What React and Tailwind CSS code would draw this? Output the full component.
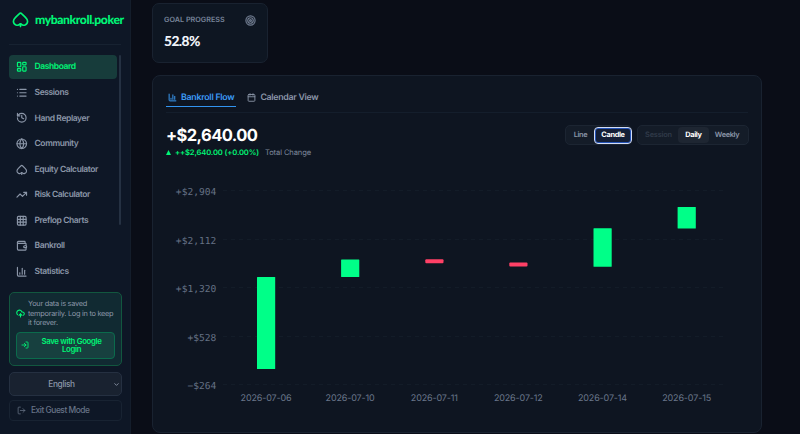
import {
  LayoutDashboard, List, History, Globe, Spade, TrendingUp, Grid3x3, Wallet,
  ChartColumn, CloudUpload, LogIn, LogOut, ChevronDown, Target, Calendar,
} from 'lucide-react';

const navItems = [
  { label: 'Dashboard', icon: LayoutDashboard, active: true },
  { label: 'Sessions', icon: List },
  { label: 'Hand Replayer', icon: History },
  { label: 'Community', icon: Globe },
  { label: 'Equity Calculator', icon: Spade },
  { label: 'Risk Calculator', icon: TrendingUp },
  { label: 'Preflop Charts', icon: Grid3x3 },
  { label: 'Bankroll', icon: Wallet },
  { label: 'Statistics', icon: ChartColumn },
];

const ticks = [
  { label: '+$2,904', y: 11.5 },
  { label: '+$2,112', y: 60 },
  { label: '+$1,320', y: 108.5 },
  { label: '+$528', y: 157 },
  { label: '−$264', y: 205.5 },
];

const candles = [
  { date: '2026-07-06', x: 100.2, top: 97, height: 92, up: true },
  { date: '2026-07-10', x: 184.3, top: 79.5, height: 17.5, up: true },
  { date: '2026-07-11', x: 268.5, top: 79.3, height: 3.9, up: false },
  { date: '2026-07-12', x: 352.5, top: 82.4, height: 4.2, up: false },
  { date: '2026-07-14', x: 436.7, top: 48.2, height: 38.5, up: true },
  { date: '2026-07-15', x: 520.8, top: 27, height: 21.6, up: true },
];

function Sidebar() {
  return (
    <aside className="flex h-full w-[131px] shrink-0 flex-col border-r border-[#141d2b] bg-[#0e1726] px-[9px]">
      <div className="flex h-[45px] shrink-0 items-center gap-[6px] border-b border-[#172231] pl-[3px] pb-[5px]">
        <Spade size={17} strokeWidth={2.3} className="shrink-0 text-[#00f576]" />
        <span className="whitespace-nowrap pt-px font-['Lato'] text-[12.2px] font-black leading-none tracking-[-0.42px] text-[#00f576]">mybankroll.poker</span>
      </div>

      <div className="mt-[10px] flex h-[228px] shrink-0 gap-[2px]">
        <nav className="flex w-[108px] shrink-0 flex-col gap-[1.6px]">
          {navItems.map(({ label, icon: Icon, active }) => (
            <a
              key={label}
              className={`flex h-6 shrink-0 items-center gap-[7px] rounded-[4px] pl-[7px] text-[8.5px] font-semibold tracking-[-0.4px] ${
                active ? 'bg-[#173c3b] text-[#00f576]' : 'text-[#8b96a8]'
              }`}
            >
              <Icon size={11.5} strokeWidth={2.4} className="shrink-0" />
              <span className="whitespace-nowrap pt-[1.4px]">{label}</span>
            </a>
          ))}
        </nav>
        <div className="h-[170px] w-[2px] rounded-full bg-[#253142]" />
      </div>

      <div className="mt-[9px] h-[74px] w-[113px] shrink-0 rounded-[5px] border border-[#12573f] bg-[#112a32] px-[6px] pt-[6px]">
        <div className="flex items-center gap-[3px]">
          <CloudUpload size={9} strokeWidth={2.8} className="shrink-0 text-[#00f576]" />
          <p className="whitespace-nowrap text-[7.4px] leading-[9.6px] tracking-[-0.28px] text-[#8b96a8]">
            Your data is saved<br />temporarily. Log in to keep<br />it forever.
          </p>
        </div>
        <button className="mt-[4px] flex h-[27px] w-[99px] items-center rounded-[4px] border border-[#0b6b4c] bg-[#17403f] pl-[4px] text-[#00f576]">
          <LogIn size={8} strokeWidth={2.6} className="shrink-0" />
          <span className="flex-1 text-center text-[7.8px] font-semibold leading-[8.7px] tracking-[-0.33px]">Save with Google<br />Login</span>
        </button>
      </div>

      <button className="mt-[6px] flex h-[24px] w-[113px] shrink-0 items-center rounded-[5px] border border-[#253041] bg-[#192230] pr-[1px] text-[8.3px] font-medium tracking-[-0.35px] text-[#8b96a8]">
        <span className="flex-1 text-center">English</span>
        <ChevronDown size={7} strokeWidth={3} />
      </button>
      <button className="mt-[4px] flex h-[21px] w-[113px] shrink-0 items-center gap-[5px] rounded-[4px] border border-[#182332] pl-[7px] text-[8.4px] font-medium tracking-[-0.47px] text-[#677386]">
        <LogOut size={9} />
        Exit Guest Mode
      </button>
    </aside>
  );
}

function BankrollChart() {
  return (
    <svg width="582" height="230" className="block">
      {ticks.map((t) => (
        <g key={t.label}>
          <line x1="57" x2="557" y1={Math.floor(t.y) - 0.5} y2={Math.floor(t.y) - 0.5} stroke="#131c28" strokeDasharray="4 4" />
          <text x="50.3" y={t.y + 3.8} textAnchor="end" className="fill-[#657184] font-['DejaVu_Sans_Mono'] text-[9.6px]">{t.label}</text>
        </g>
      ))}
      {candles.map((c) => (
        <g key={c.date}>
          <rect x={c.x - 9.2} y={c.top} width="18.2" height={c.height} rx={c.up ? 0.5 : 1} className={c.up ? 'fill-[#00ff88]' : 'fill-[#ff4066]'} />
          <text x={c.x - 0.2} y="220.7" textAnchor="middle" className="fill-[#69758a] text-[9px] tracking-[-0.15px]">{c.date}</text>
        </g>
      ))}
    </svg>
  );
}

export default function App() {
  return (
    <div className="flex h-[434px] w-[800px] overflow-hidden bg-[#0a0d17] font-['Inter',sans-serif] [text-rendering:geometricPrecision]">
      <Sidebar />
      <main className="flex flex-1 flex-col pl-[21px]">
        <div className="mt-[3px] flex h-[60px] w-[116px] shrink-0 flex-col rounded-[7px] border border-[#192230] bg-[#0e1622] px-[11px] pt-[11px]">
          <div className="flex items-center justify-between">
            <span className="whitespace-nowrap text-[7.2px] font-semibold tracking-[0.03px] text-[#78849a]">GOAL PROGRESS</span>
            <Target size={11} strokeWidth={2.6} className="text-[#707c90]" />
          </div>
          <div className="mt-[6px] font-['Lato'] text-[13.8px] font-black leading-[18px] tracking-[-0.6px] text-[#eef2f8]">52.8%</div>
        </div>

        <section className="mt-[12px] h-[358px] w-[610px] shrink-0 rounded-[8px] border border-[#192230] bg-[#0e1521] px-[13px] pt-[12px]">
          <div className="flex h-[25px] items-start gap-[11px] border-b border-[#141e2c] text-[8.8px] font-semibold tracking-[-0.26px]">
            <div className="flex h-[19px] items-center gap-[4px] border-b-[1.5px] border-[#3294f0] px-[2px] pt-px text-[#3c9cf7]">
              <ChartColumn size={9} strokeWidth={2.6} />
              <span className="pt-px">Bankroll Flow</span>
            </div>
            <div className="flex h-[18px] items-center gap-[4px] pt-px text-[#8b96a8]">
              <Calendar size={9} strokeWidth={2.4} />
              <span className="pt-px tracking-[-0.3px]">Calendar View</span>
            </div>
          </div>

          <div className="-mr-px mt-[12px] flex items-start justify-between">
            <div>
              <div className="text-[16.5px] font-bold leading-[20px] tracking-[-0.6px] text-white">+$2,640.00</div>
              <div className="mt-[2px] flex items-center gap-[6px] whitespace-nowrap text-[7.6px] leading-[11px] tracking-[-0.12px]">
                <span className="flex items-center gap-[4px] font-semibold text-[#00f576]">
                  <svg width="5" height="5" viewBox="0 0 5 5" fill="currentColor"><path d="M2.5 0 5 5H0Z" /></svg>
                  ++$2,640.00 (+0.00%)
                </span>
                <span className="text-[#7c879a]">Total Change</span>
              </div>
            </div>
            <div className="flex gap-[5px] text-[7.4px] font-semibold tracking-[-0.35px] text-[#8b96a8]">
              <div className="flex h-[20px] w-[67px] items-center rounded-[5px] border border-[#1c2532] bg-[#141c28]">
                <span className="w-[28px] shrink-0 pl-px text-center">Line</span>
                <span className="flex h-[17px] w-[38px] shrink-0 items-center justify-center rounded-[4px] border border-[#d3ddf4] bg-[#141f37] font-bold text-white ring-1 ring-inset ring-[#2453b7]">Candle</span>
              </div>
              <div className="flex h-[20px] w-[112px] items-center rounded-[5px] border border-[#1c2532] bg-[#141c28]">
                <span className="w-[40px] pl-px text-center tracking-[-0.2px] text-[#303a48]">Session</span>
                <span className="flex h-[16px] w-[31px] items-center justify-center rounded-[4px] bg-[#1e2632] font-bold text-white">Daily</span>
                <span className="flex-1 pr-[3px] text-center">Weekly</span>
              </div>
            </div>
          </div>
          <div className="mt-[22px]">
            <BankrollChart />
          </div>
        </section>
      </main>
    </div>
  );
}
